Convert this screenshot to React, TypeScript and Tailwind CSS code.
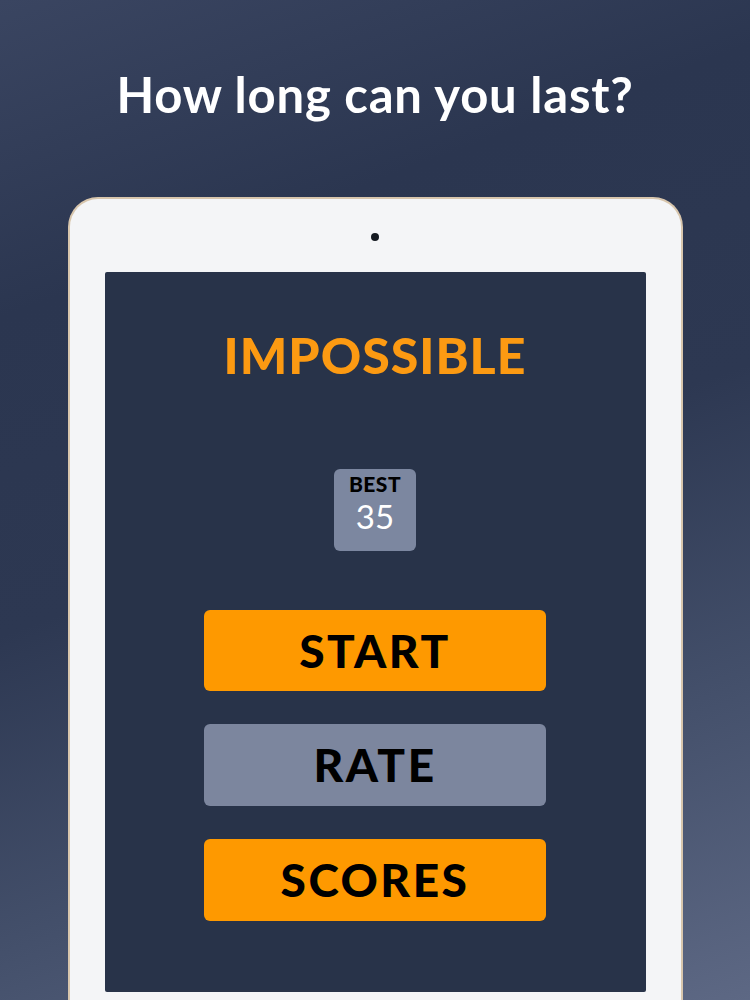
import React from "react";

export default function App() {
  return (
    <div
      className="w-[750px] h-[1000px] overflow-hidden flex flex-col items-center bg-[linear-gradient(160deg,#3a4561_0%,#2b3650_25%,#2d3852_50%,#44506b_75%,#5d6884_100%)]"
      style={{ fontFamily: "Lato, 'Open Sans', sans-serif" }}
    >
      <h1 className="mt-[64px] text-white font-bold text-[49px] leading-[60px] tracking-[0.8px]">
        How long can you last?
      </h1>
      <div className="mt-[73px] w-[615px] shrink-0 h-[820px] rounded-t-[30px] border-2 border-b-0 border-[#d8c6ad] bg-[#f4f5f7] px-[35px] flex flex-col items-center">
        <div className="mt-[34px] w-[8px] h-[8px] rounded-full bg-[#151a22]" />
        <div className="mt-[31px] w-full h-[720px] bg-[#283349] rounded-[2px] flex flex-col items-center">
          <div className="mt-[56px] text-[#fc9a12] font-black text-[50px] leading-[54px] tracking-[1px]">
            IMPOSSIBLE
          </div>
          <div className="mt-[87px] w-[82px] h-[82px] rounded-[6px] bg-[#7c87a0] flex flex-col items-center">
            <div className="mt-[3px] text-black font-black text-[21px] leading-[24px] tracking-[0.5px]">BEST</div>
            <div className="text-white font-normal text-[33px] leading-[40px]">35</div>
          </div>
          <div className="mt-[59px] flex flex-col gap-[33px]">
            <button className="w-[342px] h-[81px] rounded-[6px] bg-[#fe9900] text-black font-black text-[46px] leading-none tracking-[2.5px]">
              START
            </button>
            <button className="w-[342px] h-[82px] rounded-[6px] bg-[#7c869e] text-black font-black text-[46px] leading-none tracking-[2.5px]">
              RATE
            </button>
            <button className="w-[342px] h-[82px] rounded-[6px] bg-[#fe9900] text-black font-black text-[46px] leading-none tracking-[2.5px]">
              SCORES
            </button>
          </div>
        </div>
      </div>
    </div>
  );
}
